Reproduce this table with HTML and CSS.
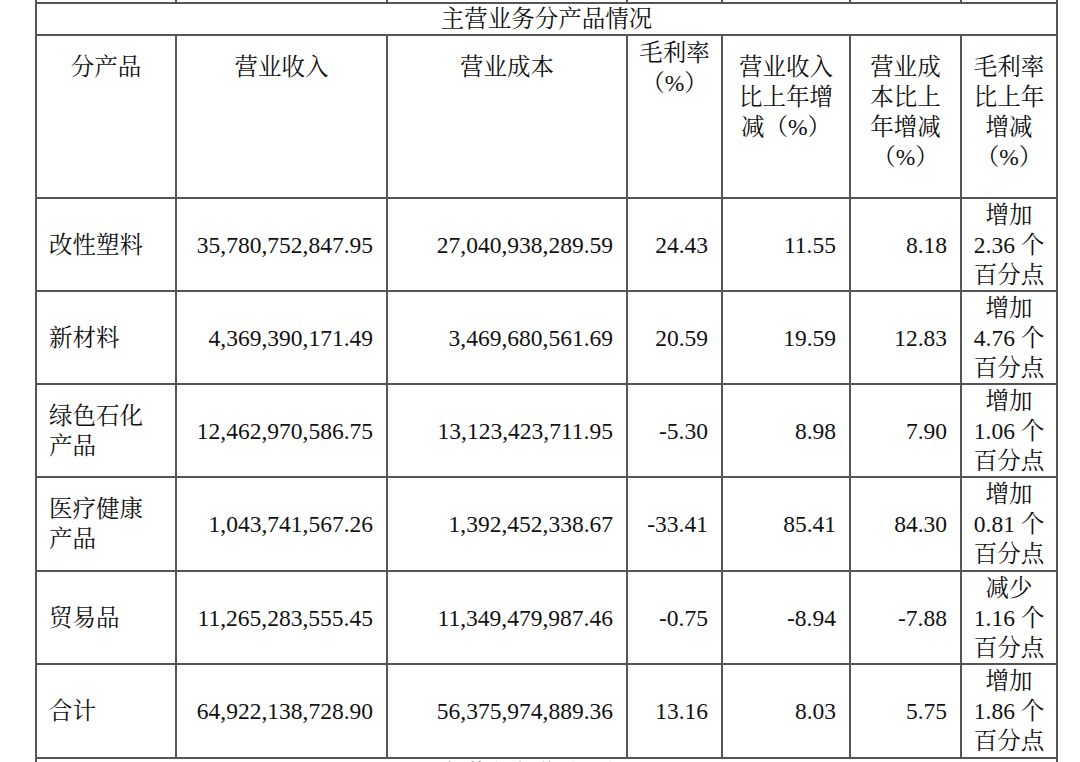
FILE: index.html
```html
<!DOCTYPE html>
<html lang="zh-CN">
<head>
<meta charset="utf-8">
<title>主营业务分产品情况</title>
<link rel="stylesheet" href="styles.css">
</head>
<body>
<div class="page">
<table class="report">
  <colgroup>
    <col class="c1"><col class="c2"><col class="c3"><col class="c4"><col class="c5"><col class="c6"><col class="c7">
  </colgroup>
  <tr class="prev-row">
    <td></td><td></td><td></td><td></td><td></td><td></td><td></td>
  </tr>
  <tr class="title-row">
    <td colspan="7" class="title">主营业务分产品情况</td>
  </tr>
  <tr class="head-row">
    <th>分产品</th>
    <th>营业收入</th>
    <th>营业成本</th>
    <th class="tight">毛利率<br>（%）</th>
    <th>营业收入<br>比上年增<br>减（%）</th>
    <th>营业成<br>本比上<br>年增减<br>（%）</th>
    <th>毛利率<br>比上年<br>增减<br>（%）</th>
  </tr>
  <tr class="data-row">
    <td class="name">改性塑料</td>
    <td class="num">35,780,752,847.95</td>
    <td class="num">27,040,938,289.59</td>
    <td class="num">24.43</td>
    <td class="num">11.55</td>
    <td class="num">8.18</td>
    <td class="delta">增加<br>2.36 个<br>百分点</td>
  </tr>
  <tr class="data-row">
    <td class="name">新材料</td>
    <td class="num">4,369,390,171.49</td>
    <td class="num">3,469,680,561.69</td>
    <td class="num">20.59</td>
    <td class="num">19.59</td>
    <td class="num">12.83</td>
    <td class="delta">增加<br>4.76 个<br>百分点</td>
  </tr>
  <tr class="data-row">
    <td class="name">绿色石化<br>产品</td>
    <td class="num">12,462,970,586.75</td>
    <td class="num">13,123,423,711.95</td>
    <td class="num">-5.30</td>
    <td class="num">8.98</td>
    <td class="num">7.90</td>
    <td class="delta">增加<br>1.06 个<br>百分点</td>
  </tr>
  <tr class="data-row tall">
    <td class="name">医疗健康<br>产品</td>
    <td class="num">1,043,741,567.26</td>
    <td class="num">1,392,452,338.67</td>
    <td class="num">-33.41</td>
    <td class="num">85.41</td>
    <td class="num">84.30</td>
    <td class="delta">增加<br>0.81 个<br>百分点</td>
  </tr>
  <tr class="data-row">
    <td class="name">贸易品</td>
    <td class="num">11,265,283,555.45</td>
    <td class="num">11,349,479,987.46</td>
    <td class="num">-0.75</td>
    <td class="num">-8.94</td>
    <td class="num">-7.88</td>
    <td class="delta">减少<br>1.16 个<br>百分点</td>
  </tr>
  <tr class="data-row tall">
    <td class="name">合计</td>
    <td class="num">64,922,138,728.90</td>
    <td class="num">56,375,974,889.36</td>
    <td class="num">13.16</td>
    <td class="num">8.03</td>
    <td class="num">5.75</td>
    <td class="delta">增加<br>1.86 个<br>百分点</td>
  </tr>
  <tr class="title-row">
    <td colspan="7" class="title">主营业务分地区情况</td>
  </tr>
</table>
</div>
</body>
</html>
```

FILE: styles.css
```css
html, body {
  margin: 0;
  padding: 0;
  background: #ffffff;
}

.page {
  width: 1080px;
  height: 762px;
  overflow: hidden;
}

.report {
  margin: -36px 0 0 35px;
  border-collapse: collapse;
  table-layout: fixed;
  width: 1023px;
  font-family: "Liberation Serif", "Noto Serif CJK SC", "Noto Sans CJK SC", serif;
  font-size: 23.5px;
  line-height: 30px;
  color: #111111;
}

.c1 { width: 140px; }
.c2 { width: 211px; }
.c3 { width: 240px; }
.c4 { width: 95px; }
.c5 { width: 128px; }
.c6 { width: 111px; }
.c7 { width: 96px; }

.report td,
.report th {
  border: 2px solid #555555;
  padding: 0;
  font-weight: normal;
  overflow: hidden;
  white-space: nowrap;
}

.prev-row td {
  height: 36px;
}

.title-row td {
  height: 28px;
}

.title {
  text-align: center;
  vertical-align: middle;
}

.head-row th {
  height: 145px;
  text-align: center;
  vertical-align: top;
  padding-top: 16px;
}

.head-row th.tight {
  padding-top: 2px;
}

.data-row td {
  height: 91px;
  vertical-align: middle;
}

.data-row.tall td {
  height: 92px;
}

.name {
  text-align: left;
  padding-left: 12px !important;
}

.num {
  text-align: right;
  padding-right: 13px !important;
}

.delta {
  text-align: center;
}
```
